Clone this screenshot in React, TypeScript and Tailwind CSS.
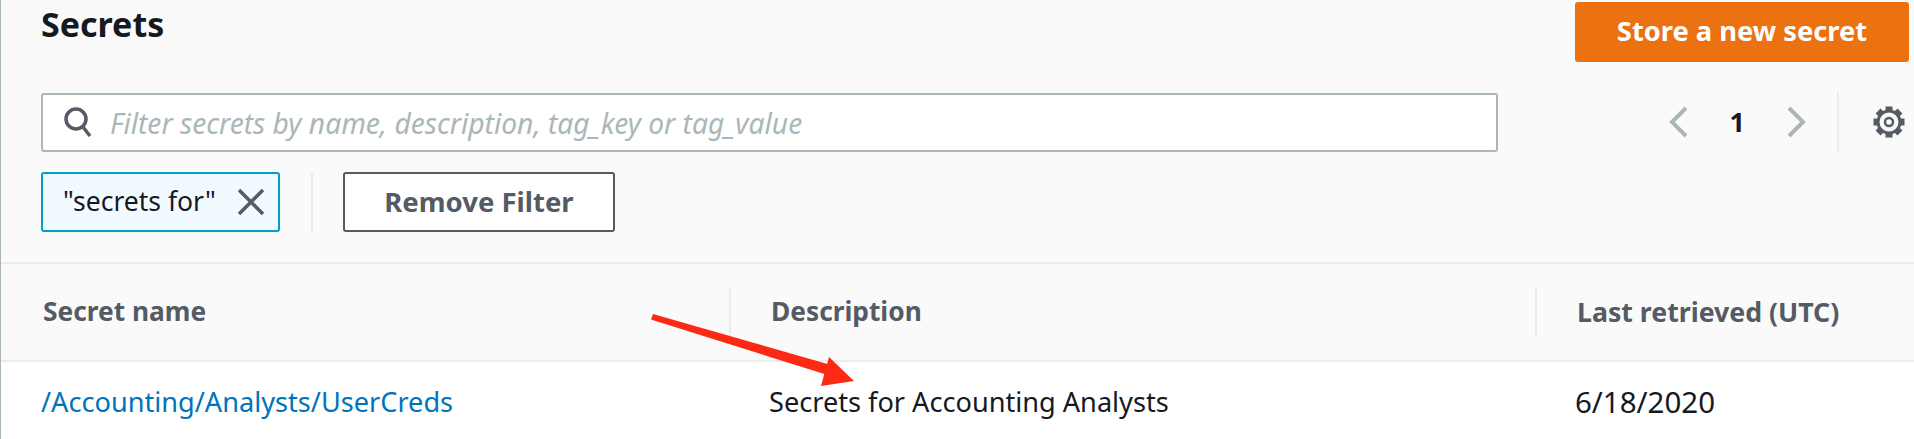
import React from "react";

function Gear() {
  const teeth = [0, 45, 90, 135, 180, 225, 270, 315];
  return (
    <svg className="ml-[33px]" width="34" height="34" viewBox="0 0 34 34" fill="none">
      {teeth.map((a) => (
        <rect key={a} x="13.5" y="1.5" width="7" height="5" fill="#545b64" transform={`rotate(${a} 17 17)`} />
      ))}
      <circle cx="17" cy="17" r="11" stroke="#545b64" strokeWidth="3" fill="#fafafa" />
      <circle cx="17" cy="17" r="4" stroke="#545b64" strokeWidth="2.5" />
    </svg>
  );
}

export default function App() {
  return (
    <div className="relative h-[439px] w-[1914px] overflow-hidden bg-[#fafafa] font-['Noto_Sans',sans-serif]">
      <div className="h-full border-l border-[#aab7b8]">
        <div className="flex items-start justify-between pl-[40px] pr-[5px] pt-[2px]">
          <h1 className="text-[34px] leading-[44px] font-bold text-[#16191f]">Secrets</h1>
          <button className="flex h-[60px] w-[334px] items-center justify-center rounded-[3px] bg-[#ec7211] pb-[2px] text-[27.3px] font-bold text-white">
            Store a new secret
          </button>
        </div>

        <div className="mt-[30px] flex items-center pl-[40px] pr-[8px]">
          <div className="flex h-[59px] w-[1457px] items-center rounded-[3px] border-2 border-[#aab7b8] bg-white pl-[20px]">
            <svg width="32" height="34" viewBox="0 0 32 34" fill="none" stroke="#545b64" strokeWidth="3.5">
              <circle cx="13" cy="14" r="10" />
              <path d="M20 22l7 9" />
            </svg>
            <span className="ml-[15px] pt-[2px] text-[28.2px] leading-[36px] italic text-[#aab7b8]">Filter secrets by name, description, tag_key or tag_value</span>
          </div>
          <div className="ml-auto flex h-[60px] items-center">
            <svg width="20" height="32" viewBox="0 0 20 32" fill="none" stroke="#aab7b8" strokeWidth="4">
              <path d="M17 2L3 16l14 14" />
            </svg>
            <span className="mx-[41px] text-[27px] font-bold text-[#16191f]">1</span>
            <svg width="20" height="32" viewBox="0 0 20 32" fill="none" stroke="#aab7b8" strokeWidth="4">
              <path d="M3 2l14 14L3 30" />
            </svg>
            <div className="ml-[31px] h-full w-[2px] bg-[#eaeded]" />
            <Gear />
          </div>
        </div>

        <div className="mt-[20px] flex h-[60px] items-stretch pl-[40px]">
          <div className="flex w-[239px] items-center rounded-[3px] border-2 border-[#00a1c9] bg-[#f1faff] pl-[20px]">
            <span className="text-[26.5px] text-[#16191f]">"secrets for"</span>
            <svg className="ml-[21px]" width="28" height="28" viewBox="0 0 28 28" fill="none" stroke="#545b64" strokeWidth="3.5">
              <path d="M2 2l24 24M26 2L2 26" />
            </svg>
          </div>
          <div className="ml-[31px] w-[2px] bg-[#eaeded]" />
          <button className="ml-[30px] w-[272px] rounded-[3px] border-2 border-[#545b64] bg-white text-[27.5px] font-bold text-[#545b64]">
            Remove Filter
          </button>
        </div>

        <div className="mt-[30px] grid h-[100px] grid-cols-[730px_806px_1fr] items-center border-y-2 border-[#eaeded]">
          <div className="flex h-[48px] items-center border-r-2 border-[#eaeded] pl-[42px] text-[26.3px] font-bold text-[#545b64]">Secret name</div>
          <div className="flex h-[48px] items-center border-r-2 border-[#eaeded] pl-[40px] text-[26.3px] font-bold text-[#545b64]">Description</div>
          <div className="pl-[40px] text-[26.7px] font-bold text-[#545b64]">Last retrieved (UTC)</div>
        </div>

        <div className="grid h-[77px] grid-cols-[730px_806px_1fr] items-center bg-white pt-[3px] text-[27.15px] text-[#16191f]">
          <a className="pl-[40px] text-[#0073bb]">/Accounting/Analysts/UserCreds</a>
          <div className="pl-[38px]">Secrets for Accounting Analysts</div>
          <div className="pl-[38px] text-[29.5px]">6/18/2020</div>
        </div>
      </div>

      <svg className="absolute left-0 top-0" width="1914" height="439" fill="none">
        <path d="M653 314L651 319.5L826 374.5L831 365Z" fill="#fc2a15" />
        <path d="M829 357L821 386L854 381Z" fill="#fc2a15" />
      </svg>
    </div>
  );
}
